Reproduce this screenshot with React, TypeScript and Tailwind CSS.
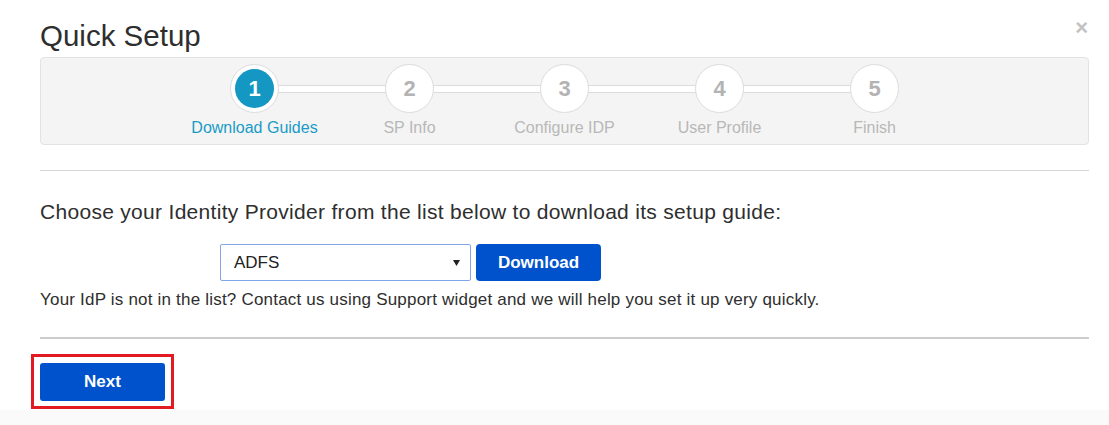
const steps = [
  { n: 1, label: 'Download Guides' },
  { n: 2, label: 'SP Info' },
  { n: 3, label: 'Configure IDP' },
  { n: 4, label: 'User Profile' },
  { n: 5, label: 'Finish' },
];

function Stepper({ current }: { current: number }) {
  return (
    <div className="flex justify-center">
      {steps.map((s, i) => {
        const active = s.n === current;
        return (
          <div key={s.n} className="relative w-[155px] flex flex-col items-center">
            {i < steps.length - 1 && (
              <div className="absolute top-[21px] left-1/2 w-[155px] h-[8px] bg-white border border-[#dcdcdc]" />
            )}
            <div className="relative z-10 w-[49px] h-[49px] rounded-full bg-white border border-[#dcdcdc] flex items-center justify-center">
              {active ? (
                <div className="w-[39px] h-[39px] rounded-full bg-[#1497c2] flex items-center justify-center text-white font-bold text-[22px]">
                  {s.n}
                </div>
              ) : (
                <span className="text-[#b3b3b3] font-bold text-[22px]">{s.n}</span>
              )}
            </div>
            <div className={`mt-[5px] text-[16px] leading-[20px] ${active ? 'text-[#1a9bc6]' : 'text-[#b8b8b8]'}`}>
              {s.label}
            </div>
          </div>
        );
      })}
    </div>
  );
}

export default function App() {
  return (
    <div className="w-[1109px] h-[425px] bg-[#fafafa] font-['Liberation_Sans',Arial,sans-serif] text-[#333]">
      <div className="relative h-[410px] bg-white pl-10 pr-5 pt-5">
        <button className="absolute top-[16px] right-[21px] text-[22px] font-bold leading-[24px] text-[#c2c2c2]">×</button>
        <h1 className="text-[29.5px] leading-[32px] text-[#2e2e2e]">Quick Setup</h1>

        <div className="mt-[5px] h-[88px] bg-[#f4f4f4] border border-[#e3e3e3] rounded-[4px] pt-[6px]">
          <Stepper current={1} />
        </div>

        <div className="mt-[25px] h-px bg-[#d6d6d6]" />

        <p className="mt-[29px] text-[21px] leading-[24px] tracking-[0.3px] text-[#2e2e2e]">
          Choose your Identity Provider from the list below to download its setup guide:
        </p>

        <div className="mt-[20px] ml-[180px] flex">
          <div className="w-[251px] h-[37px] border border-[#80a6e6] rounded-[2px] pl-[13px] pr-[10px] flex items-center justify-between text-[17px] text-[#222]">
            <span>ADFS</span>
            <svg width="7" height="6" viewBox="0 0 7 6">
              <path d="M0 0h7L3.5 6z" fill="#222" />
            </svg>
          </div>
          <button className="ml-[5px] w-[125px] h-[37px] bg-[#0052cc] rounded-[4px] text-white font-bold text-[17px]">
            Download
          </button>
        </div>

        <p className="mt-[9px] text-[17px] leading-[20px] tracking-[0.2px] text-[#2e2e2e]">
          Your IdP is not in the list? Contact us using Support widget and we will help you set it up very quickly.
        </p>

        <div className="mt-[27px] h-[2px] bg-[#cccccc]" />

        <div className="mt-[15px] -ml-[9px] inline-block border-[3px] border-[#e21b23] p-[6px] pb-[5px]">
          <button className="block w-[125px] h-[38px] bg-[#0052cc] rounded-[3px] text-white font-bold text-[17px]">
            Next
          </button>
        </div>
      </div>
    </div>
  );
}
